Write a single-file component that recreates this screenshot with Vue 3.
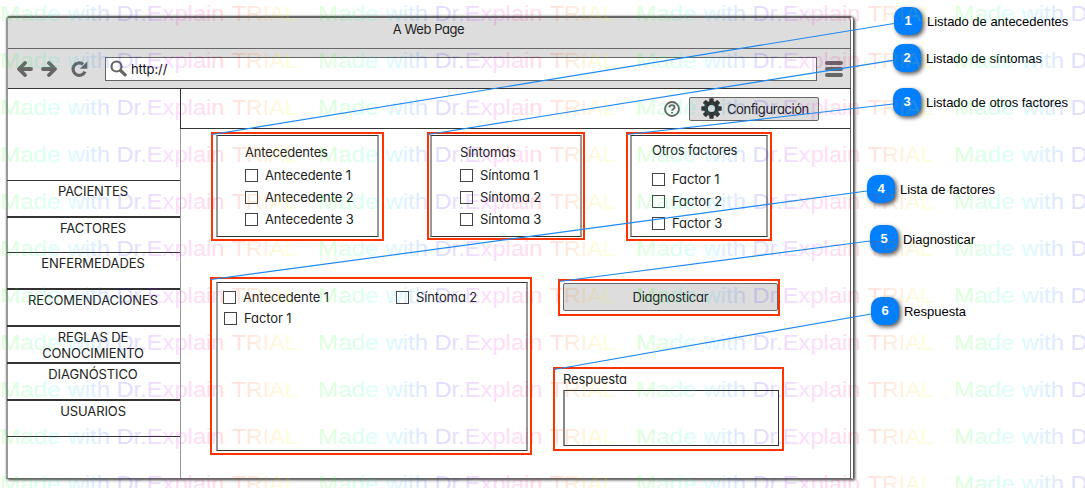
<script setup>
const menu = [
  { label: 'PACIENTES', tall: 36, rule: 1 },
  { label: 'FACTORES', tall: 36, rule: 2 },
  { label: 'ENFERMEDADES', tall: 36, rule: 1 },
  { label: 'RECOMENDACIONES', tall: 37, rule: 2 },
  { label: 'REGLAS DE CONOCIMIENTO', tall: 37, rule: 2 },
  { label: 'DIAGNÓSTICO', tall: 37, rule: 2 },
  { label: 'USUARIOS', tall: 37, rule: 2 },
]

const groups = [
  { id: 'antecedentes', title: 'Antecedentes', items: ['Antecedente 1', 'Antecedente 2', 'Antecedente 3'] },
  { id: 'sintomas', title: 'Síntomas', items: ['Síntoma 1', 'Síntoma 2', 'Síntoma 3'] },
  { id: 'otros', title: 'Otros factores', items: ['Factor 1', 'Factor 2', 'Factor 3'] },
]

const selected = ['Antecedente 1', 'Síntoma 2', 'Factor 1']

const callouts = [
  { n: 1, text: 'Listado de antecedentes', x: 894, y: 7, box: [211, 132, 173, 109], line: [212, 134.5, 894, 23.5] },
  { n: 2, text: 'Listado de síntomas', x: 893, y: 44, box: [427, 132, 158, 108], line: [428, 134.5, 893, 60.3] },
  { n: 3, text: 'Listado de otros factores', x: 893, y: 88, box: [626, 132, 146, 109], line: [627, 134.5, 893, 104] },
  { n: 4, text: 'Lista de factores', x: 867, y: 175, box: [210, 277, 322, 178], line: [211, 279.5, 867, 191] },
  { n: 5, text: 'Diagnosticar', x: 870, y: 225, box: [558, 279, 222, 37], line: [559, 281.5, 870, 241] },
  { n: 6, text: 'Respuesta', x: 871, y: 297, box: [553, 367, 231, 84], line: [554, 369.5, 871, 314] },
]

const px = (n) => n + 'px'
const boxStyle = ([x, y, w, h]) => ({ left: px(x), top: px(y), width: px(w), height: px(h) })

const rainbow = Array.from({ length: 21 }, (_, i) => ({
  offset: i / 20,
  color: `hsl(${(120 + i * 15.8) % 360} 100% 50%)`,
}))
const words = [
  { text: 'Made', x: 0, length: 60.5 },
  { text: 'with', x: 67.5, length: 42.5 },
  { text: 'Dr.Explain', x: 116.5, length: 108 },
  { text: 'TRIAL', x: 232, length: 65.5 },
]
const marks = []
for (let row = 0; row < 11; row++) {
  for (let col = 0; col < 4; col++) marks.push({ x: col * 318, y: row * 47 })
}
</script>

<template>
  <div class="canvas">
    <main class="window">
      <header class="titlebar">A Web Page</header>
      <div class="toolbar">
        <svg class="nav" width="17" height="16" viewBox="0 0 17 16">
          <path d="M9 2 3 8l6 6M3.5 8H15" />
        </svg>
        <svg class="nav forward" width="17" height="16" viewBox="0 0 17 16">
          <path d="M8 2l6 6-6 6M13.5 8H2" />
        </svg>
        <svg class="reload" width="18" height="16" viewBox="0 0 18 16">
          <path class="arc" d="M12.2 3.3A6.2 6.2 0 1 0 14 10.6" />
          <path class="head" d="M16.3 .4v7.4H8.8z" />
        </svg>
        <div class="address">
          <svg width="17" height="17" viewBox="0 0 17 17">
            <circle cx="6.5" cy="6.5" r="5" />
            <path d="M10.5 10.5l4.6 4.4" />
          </svg>
          <span>http://</span>
        </div>
        <div class="burger"><i /><i /><i /></div>
      </div>

      <div class="body">
        <nav class="sidebar">
          <div
            v-for="m in menu"
            :key="m.label"
            class="entry"
            :class="{ thick: m.rule === 2 }"
            :style="{ height: px(m.tall) }"
          >
            <span>{{ m.label }}</span>
          </div>
          <div class="entry last" />
        </nav>

        <section class="content">
          <div class="actions">
            <svg class="help" width="16" height="16" viewBox="0 0 16 16">
              <circle cx="8" cy="8" r="7" />
              <path d="M5.3 6.4C5.4 3.4 10.6 3.4 10.6 6.2 10.6 8 8 7.9 8 9.7" />
              <path d="M8 11v1.6" />
            </svg>
            <button class="config">
              <svg width="21" height="21" viewBox="-10.5 -10.5 21 21">
                <rect
                  v-for="k in 8"
                  :key="k"
                  x="-2.2"
                  y="-10.2"
                  width="4.4"
                  height="6"
                  rx="0.8"
                  :transform="`rotate(${k * 45})`"
                />
                <circle r="5.6" />
              </svg>
              Configuración
            </button>
          </div>

          <div class="groups">
            <div v-for="g in groups" :key="g.id" class="panel" :class="g.id">
              <h2>{{ g.title }}</h2>
              <label v-for="item in g.items" :key="item" class="check"><i />{{ item }}</label>
            </div>
          </div>

          <div class="result">
            <div class="panel chosen">
              <label v-for="item in selected" :key="item" class="check"><i />{{ item }}</label>
            </div>
            <div class="side">
              <button class="diagnose">Diagnosticar</button>
              <div class="caption">Respuesta</div>
              <div class="answer" />
            </div>
          </div>
        </section>
      </div>
    </main>

    <div v-for="c in callouts" :key="c.n" class="callout" :style="{ left: px(c.x), top: px(c.y) }">
      <b>{{ c.n }}</b><span>{{ c.text }}</span>
    </div>

    <svg class="overlay watermark" width="1085" height="488">
      <defs>
        <linearGradient id="rainbow" gradientUnits="userSpaceOnUse" x1="10" y1="0" x2="302" y2="0">
          <stop v-for="s in rainbow" :key="s.offset" :offset="s.offset" :stop-color="s.color" />
        </linearGradient>
      </defs>
      <g v-for="(m, i) in marks" :key="i" :transform="`translate(${m.x} ${m.y})`">
        <text
          v-for="w in words"
          :key="w.text"
          :x="w.x"
          y="20.7"
          :textLength="w.length"
          lengthAdjust="spacingAndGlyphs"
          fill="url(#rainbow)"
        >{{ w.text }}</text>
      </g>
    </svg>

    <div v-for="c in callouts" :key="c.n" class="frame" :style="boxStyle(c.box)" />
    <svg class="overlay" width="1085" height="488">
      <line
        v-for="c in callouts"
        :key="c.n"
        class="leader"
        :x1="c.line[0]"
        :y1="c.line[1]"
        :x2="c.line[2]"
        :y2="c.line[3]"
      />
    </svg>
  </div>
</template>

<style>
body {
  margin: 0;
  background: #fff;
}
</style>

<style scoped>
* {
  box-sizing: border-box;
}
.canvas {
  position: relative;
  width: 1085px;
  height: 488px;
  padding: 16px 0 0 6px;
  overflow: hidden;
  background: #fff;
  font: 13px Inter, sans-serif;
  font-feature-settings: 'cv11';
  letter-spacing: -0.1px;
  color: #222;
}
.window {
  width: 847px;
  height: 463px;
  display: flex;
  flex-direction: column;
  border-top: 2px solid #666;
  border-left: 2px solid #999;
  border-right: 2px solid #fff;
  border-bottom: 1px solid #666;
  border-radius: 4px 4px 0 0;
  background: #fff;
  box-shadow: 2px 1px 3px rgba(0, 0, 0, 0.75), 0 0 2px rgba(0, 0, 0, 0.3);
}
.titlebar {
  height: 31px;
  flex: none;
  padding-right: 1px;
  border-bottom: 1px solid #666;
  border-right: 1px solid #666;
  background: #ddd;
  line-height: 23px;
  text-align: center;
  letter-spacing: -0.42px;
  border-radius: 2px 3px 0 0;
}
.toolbar {
  height: 40px;
  flex: none;
  display: flex;
  align-items: center;
  padding: 0 6px 0 8px;
  border-bottom: 1px solid #333;
  border-right: 1px solid #666;
  background: #ddd;
}
.nav {
  fill: none;
  stroke: #666;
  stroke-width: 3.8;
  stroke-linecap: round;
  stroke-linejoin: round;
}
.forward {
  margin-left: 8px;
}
.reload {
  margin-left: 13px;
}
.reload .arc {
  fill: none;
  stroke: #666;
  stroke-width: 3.2;
}
.reload .head {
  fill: #666;
}
.address {
  width: 712px;
  height: 24px;
  margin-left: 16px;
  padding-left: 4px;
  display: flex;
  align-items: center;
  gap: 4px;
  border: 1px solid #666;
  background: #fff;
  color: #111;
}
.address svg {
  fill: none;
  stroke: #666;
  stroke-width: 2.2;
}
.address path {
  stroke-width: 3.2;
  stroke-linecap: round;
}
.burger {
  width: 18px;
  margin-left: 8px;
  display: flex;
  flex-direction: column;
  gap: 2px;
}
.burger i {
  height: 4px;
  border-radius: 2px;
  background: #666;
}
.body {
  flex: 1;
  display: flex;
}
.sidebar {
  width: 174px;
  padding-top: 91px;
  border-right: 1px solid #999;
  margin-left: -1px;
}
.entry {
  padding: 2px 1px 0 0;
  border-top: 1px solid #333;
  text-align: center;
  line-height: 16px;
  letter-spacing: -0.1px;
}
.entry.thick {
  border-top-width: 2px;
}
.entry span {
  display: block;
  width: 110px;
  margin: 0 auto;
}
.entry:nth-child(4) span {
  width: 150px;
}
.content {
  flex: 1;
  border-right: 1px solid #666;
}
.actions {
  height: 40px;
  display: flex;
  align-items: center;
  justify-content: flex-end;
  gap: 9px;
  padding-right: 31px;
  margin-left: -1px;
  border-left: 1px solid #333;
  border-bottom: 1px solid #333;
}
.help {
  fill: none;
  stroke: #666;
  stroke-width: 1.9;
}
.config,
.diagnose {
  display: flex;
  align-items: center;
  border: 1px solid #666;
  border-radius: 2px;
  background: #ddd;
  font: inherit;
  font-feature-settings: inherit;
  color: inherit;
}
.config {
  width: 130px;
  height: 24px;
  padding: 0 0 0 11px;
  gap: 5px;
  letter-spacing: -0.42px;
  white-space: nowrap;
}
.config svg {
  flex: none;
  fill: #333;
}
.config circle {
  fill: #ddd;
  stroke: #333;
  stroke-width: 4;
}
.groups {
  display: flex;
  padding: 6px 0 0 35px;
}
.panel {
  height: 102px;
  padding: 5px 0 0 27px;
  border: 1px solid #333;
  border-left: 2px solid #999;
  border-right: 2px solid #999;
}
.antecedentes {
  width: 163px;
}
.sintomas {
  width: 152px;
  margin-left: 51px;
  padding-left: 28px;
}
.otros {
  width: 138px;
  margin-left: 48px;
  padding: 3px 0 0 20px;
}
h2 {
  height: 22px;
  margin: 0 0 2px;
  font: inherit;
  line-height: 22px;
  letter-spacing: -0.2px;
}
.otros h2 {
  margin-bottom: 8px;
}
.check {
  height: 22px;
  display: flex;
  gap: 7px;
  line-height: 21px;
  white-space: nowrap;
}
.check i {
  width: 13px;
  height: 13px;
  margin-top: 4px;
  border: 1px solid #444;
}
.result {
  display: flex;
  padding: 45px 0 0 35px;
}
.chosen {
  width: 312px;
  height: 169px;
  padding: 4px 0 0 5px;
  display: grid;
  grid-template-columns: 173px 1fr;
  grid-auto-rows: 21px;
}
.chosen .check:nth-child(3) {
  padding-left: 1px;
}
.side {
  width: 216px;
  margin: 1px 0 0 35px;
}
.diagnose {
  width: 215px;
  height: 28px;
  justify-content: center;
  letter-spacing: -0.2px;
}
.caption {
  height: 22px;
  margin-top: 57px;
  line-height: 22px;
}
.answer {
  height: 56px;
  border: 1px solid #333;
  border-left: 2px solid #888;
}
.overlay {
  position: absolute;
  left: 0;
  top: 0;
}
.watermark {
  opacity: 0.13;
}
.watermark text {
  font: 22.5px 'Liberation Sans', Arial, sans-serif;
  letter-spacing: 0;
}
.frame {
  position: absolute;
  border: 2px solid #ff3300;
}
.leader {
  stroke: #1e88f5;
  stroke-width: 1.2;
}
.callout {
  position: absolute;
  display: flex;
  align-items: center;
  gap: 5px;
  font: 13px 'Liberation Sans', Arial, sans-serif;
  letter-spacing: -0.02px;
  color: #000;
  white-space: nowrap;
}
.callout b {
  width: 28px;
  height: 28px;
  border-radius: 10px;
  background: #0080ff;
  box-shadow: 2px 2px 4px rgba(0, 0, 0, 0.65);
  color: #fff;
  line-height: 28px;
  text-align: center;
}
</style>
